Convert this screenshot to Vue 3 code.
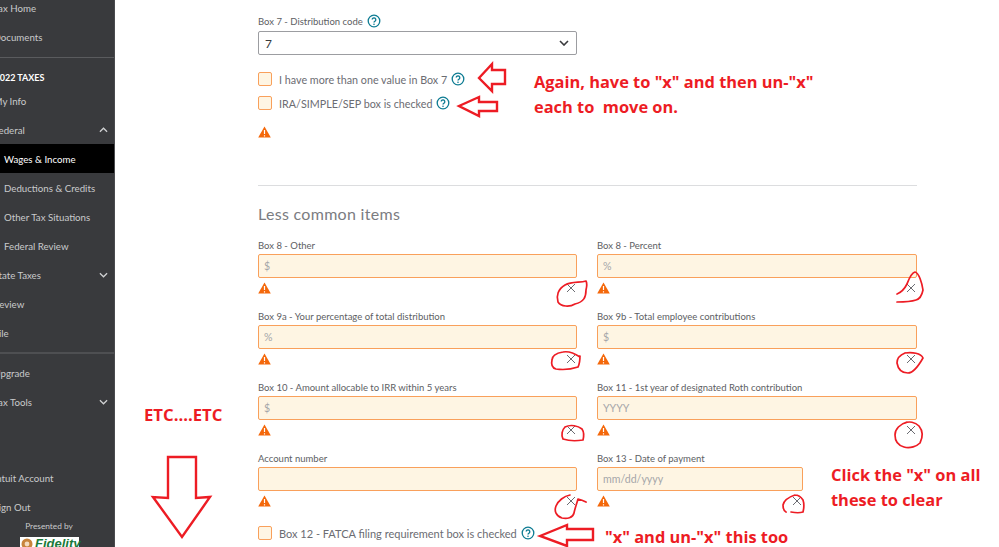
<script setup>
const navTop = [
  { t: 'Tax Home' }, { t: 'Documents' }
]
const navMid = [
  { t: 'My Info' },
  { t: 'Federal', chev: 'up' },
  { t: 'Wages & Income', sub: true, active: true },
  { t: 'Deductions & Credits', sub: true },
  { t: 'Other Tax Situations', sub: true },
  { t: 'Federal Review', sub: true },
  { t: 'State Taxes', chev: 'down' },
  { t: 'Review' },
  { t: 'File' }
]
const navLow = [{ t: 'Upgrade' }, { t: 'Tax Tools', chev: 'down' }]
const navEnd = [{ t: 'Intuit Account' }, { t: 'Sign Out' }]

const fields = [
  { label: 'Box 8 - Other', ph: '$' },
  { label: 'Box 8 - Percent', ph: '%' },
  { label: 'Box 9a - Your percentage of total distribution', ph: '%' },
  { label: 'Box 9b - Total employee contributions', ph: '$' },
  { label: 'Box 10 - Amount allocable to IRR within 5 years', ph: '$' },
  { label: 'Box 11 - 1st year of designated Roth contribution', ph: 'YYYY' },
  { label: 'Account number', ph: '' },
  { label: 'Box 13 - Date of payment', ph: 'mm/dd/yyyy', short: true }
]

const arrows = [
  '479,78 492,64 492,70 505,70 505,84 492,84 492,91',
  '459,106 479,97 479,102 497,102 497,111 479,111 479,116',
  '540,536 567,525 567,529 593,529 593,540 567,540 567,546',
  '168,457 196,457 196,498 210,497 182,537 153,497 168,498'
]
const scribbles = [
  'M565 285C558 289 556 296 558 302C561 307 570 307 575 304C584 302 586 297 586 290C587 286 587 283 586 281C580 283 572 281 565 285',
  'M580 357C574 353 568 351 563 352C557 353 552 355 552 360C551 364 552 368 556 369C563 370 572 369 578 367C580 363 580 359 580 356',
  'M897 294C902 292 905 288 907 284C909 279 911 273 915 272C919 273 922 283 923 290C922 295 920 299 916 300C910 302 903 302 897 302',
  'M905 353C900 355 897 359 897 363C898 369 902 373 908 373C914 373 919 365 923 358C921 353 912 352 905 353',
  'M565 427C562 430 561 435 563 439C569 441 577 441 583 440C584 436 584 432 582 429C578 426 571 424 565 427',
  'M570 495C564 496 558 501 556 506C554 511 556 516 562 518C567 519 573 518 574 513C575 508 577 503 578 499C582 500 584 501 586 502',
  'M907 422C900 424 895 429 895 435C895 441 897 445 904 447C910 449 917 446 920 443C923 437 923 431 919 426C915 422 909 421 905 423',
  'M795 495C789 497 784 500 783 505C783 509 784 511 786 512M791 512C796 513 800 513 803 512C804 508 804 503 803 500C801 497 798 495 795 495'
]
</script>

<template>
  <div class="page">
    <aside class="side">
      <div class="nav-block">
        <div v-for="n in navTop" :key="n.t" class="nav">{{ n.t }}</div>
      </div>
      <div class="rule"></div>
      <div class="year">2022 TAXES</div>
      <div class="nav-block">
        <div
          v-for="n in navMid"
          :key="n.t"
          class="nav"
          :class="{ sub: n.sub, active: n.active }"
        >
          <span>{{ n.t }}</span>
          <svg v-if="n.chev" class="chev" viewBox="0 0 10 6" :class="n.chev">
            <path d="M1 1l4 4 4-4" />
          </svg>
        </div>
      </div>
      <div class="rule rule-low"></div>
      <div class="nav-block">
        <div v-for="n in navLow" :key="n.t" class="nav">
          <span>{{ n.t }}</span>
          <svg v-if="n.chev" class="chev" viewBox="0 0 10 6"><path d="M1 1l4 4 4-4" /></svg>
        </div>
      </div>
      <div class="nav-block end">
        <div v-for="n in navEnd" :key="n.t" class="nav">{{ n.t }}</div>
      </div>
      <div class="presented">Presented by</div>
      <div class="logo">
        <svg class="logo-mark" viewBox="0 0 12 12"><circle cx="6" cy="6" r="5.5" fill="#c8843c" /><circle cx="6" cy="6" r="2.4" fill="#f3dcc0" /></svg>
        <span>Fidelity</span>
      </div>
    </aside>

    <main class="main">
      <div class="label">
        Box 7 - Distribution code
        <svg class="help" viewBox="0 0 14 14"><circle cx="7" cy="7" r="5.8" /><path d="M5.2 5.6a1.8 1.8 0 1 1 2.7 1.6c-.6.4-.9.7-.9 1.3" /><circle class="dot" cx="7" cy="10.2" r=".8" /></svg>
      </div>
      <div class="select">
        <span>7</span>
        <svg class="sel-chev" viewBox="0 0 10 6"><path d="M1 1l4 4 4-4" /></svg>
      </div>

      <div class="check first">
        <span class="box"></span>
        I have more than one value in Box 7
        <svg class="help" viewBox="0 0 14 14"><circle cx="7" cy="7" r="5.8" /><path d="M5.2 5.6a1.8 1.8 0 1 1 2.7 1.6c-.6.4-.9.7-.9 1.3" /><circle class="dot" cx="7" cy="10.2" r=".8" /></svg>
      </div>
      <div class="check second">
        <span class="box"></span>
        IRA/SIMPLE/SEP box is checked
        <svg class="help" viewBox="0 0 14 14"><circle cx="7" cy="7" r="5.8" /><path d="M5.2 5.6a1.8 1.8 0 1 1 2.7 1.6c-.6.4-.9.7-.9 1.3" /><circle class="dot" cx="7" cy="10.2" r=".8" /></svg>
      </div>
      <svg class="warn warn-solo" viewBox="0 0 13 12"><path d="M6.5.6 12.8 11.6H.2Z" /><path class="mark" d="M6.5 4v4M6.5 9.2v1.2" /></svg>

      <div class="divider"></div>
      <h2 class="heading">Less common items</h2>

      <div class="grid">
        <div v-for="f in fields" :key="f.label" class="field" :class="{ short: f.short }">
          <div class="label">{{ f.label }}</div>
          <div class="input">{{ f.ph }}</div>
          <div class="err">
            <svg class="warn" viewBox="0 0 13 12"><path d="M6.5.6 12.8 11.6H.2Z" /><path class="mark" d="M6.5 4v4M6.5 9.2v1.2" /></svg>
            <svg class="x" viewBox="0 0 10 10"><path d="M1 1l8 8M9 1l-8 8" /></svg>
          </div>
        </div>
      </div>

      <div class="check last">
        <span class="box"></span>
        Box 12 - FATCA filing requirement box is checked
        <svg class="help" viewBox="0 0 14 14"><circle cx="7" cy="7" r="5.8" /><path d="M5.2 5.6a1.8 1.8 0 1 1 2.7 1.6c-.6.4-.9.7-.9 1.3" /><circle class="dot" cx="7" cy="10.2" r=".8" /></svg>
      </div>
    </main>

    <svg class="ink" viewBox="0 0 999 547">
      <polygon v-for="a in arrows" :key="a" :points="a" class="arrow" />
      <path v-for="s in scribbles" :key="s" :d="s" class="scribble" />
    </svg>
    <div class="note note-again">Again, have to "x" and then un-"x"<br />each to&nbsp; move on.</div>
    <div class="note note-click">Click the "x" on all<br />these to clear</div>
    <div class="note note-this">"x" and un-"x" this too</div>
    <div class="note note-etc">ETC....ETC</div>
  </div>
</template>

<style>
html, body { margin: 0; background: #fff; }
</style>

<style scoped>
.page {
  position: relative;
  display: flex;
  width: 999px;
  height: 547px;
  overflow: hidden;
  background: #fff;
  font-family: Lato, "Open Sans", sans-serif;
}
.side {
  flex: 0 0 115px;
  box-sizing: border-box;
  width: 115px;
  height: 547px;
  background: #393a3d;
  border-right: 1px solid #4a4b4e;
  color: #c9cacc;
  font-size: 9.7px;
  overflow: hidden;
}
.nav-block:first-child { margin-top: -7px; }
.nav {
  display: flex;
  align-items: center;
  justify-content: space-between;
  height: 29px;
  padding: 0 6px 0 0;
  margin-left: -6.5px;
  white-space: nowrap;
}
.nav.sub { margin-left: 0; padding-left: 4px; padding-right: 0; }
.nav.active { background: #000; color: #fff; }
.chev {
  width: 9px;
  height: 6px;
  fill: none;
  stroke: #d0d1d3;
  stroke-width: 1.4;
}
.chev.up { transform: rotate(180deg); }
.rule { height: 1px; background: #5a5b5e; margin-top: 6px; }
.rule-low { height: 2px; background: #4e4f52; margin-top: 5px; }
.year {
  margin: 13px 0 1px -5.5px;
  height: 14px;
  line-height: 14px;
  font-size: 9px;
  font-weight: 700;
  color: #fff;
}
.rule-low + .nav-block { margin-top: 4px; }
.end { margin-top: 47px; }
.presented {
  width: 98px;
  text-align: center;
  font-size: 8.3px;
  line-height: 11px;
  color: #c9cacc;
}
.logo {
  display: flex;
  align-items: flex-start;
  gap: 2px;
  width: 59px;
  height: 18px;
  margin: 5px 0 0 20px;
  padding-left: 1px;
  box-sizing: border-box;
  background: #fff;
  color: #1a7a3a;
  font-size: 13px;
  line-height: 14px;
  font-weight: 900;
  font-style: italic;
  font-family: "Liberation Sans", sans-serif;
}
.logo-mark { width: 12px; height: 12px; flex: none; margin-top: 1px; }

.main {
  flex: 1;
  box-sizing: border-box;
  padding: 14px 0 0 143px;
  color: #6b6c72;
}
.label {
  display: flex;
  align-items: center;
  gap: 4px;
  height: 14px;
  font-size: 9.5px;
  color: #5d5e63;
  white-space: nowrap;
}
.help {
  width: 14px;
  height: 14px;
  flex: none;
  fill: none;
  stroke: #0e7c93;
  stroke-width: 1.3;
}
.help .dot { fill: #0e7c93; stroke: none; }
.select {
  display: flex;
  align-items: center;
  justify-content: space-between;
  box-sizing: border-box;
  width: 319px;
  height: 24px;
  margin-top: 3px;
  padding: 0 7px 0 6px;
  border: 1px solid #9c9da1;
  border-radius: 2px;
  font-size: 12px;
  color: #393a3d;
}
.sel-chev {
  width: 10px;
  height: 6px;
  fill: none;
  stroke: #393a3d;
  stroke-width: 1.6;
}
.check {
  display: flex;
  align-items: center;
  gap: 6px;
  height: 14px;
  font-size: 10.75px;
  color: #6b6c72;
  white-space: nowrap;
}
.check .help { margin-left: -2px; }
.check.first { margin-top: 17px; }
.check.second { margin-top: 10px; }
.check.last { margin-top: 4px; font-size: 11px; }
.box {
  box-sizing: border-box;
  width: 14px;
  height: 14px;
  margin-right: 1px;
  background: #fef5e3;
  border: 1px solid #f9a05b;
  border-radius: 2px;
}
.warn { width: 13px; height: 12px; flex: none; }
.warn path { fill: #f4680b; }
.warn .mark { fill: none; stroke: #fff; stroke-width: 1.2; }
.warn-solo { display: block; margin: 16px 0 0 0; }
.divider {
  width: 659px;
  height: 1px;
  margin-top: 47px;
  background: #dcdddf;
}
.heading {
  margin: 19px 0 0;
  height: 18px;
  line-height: 18px;
  font-size: 16px;
  font-weight: 400;
  letter-spacing: .3px;
  color: #7b7c81;
}
.grid {
  display: grid;
  grid-template-columns: 319px 320px;
  column-gap: 20px;
  width: 659px;
  margin-top: 15px;
}
.field { height: 71px; }
.input {
  box-sizing: border-box;
  height: 24px;
  margin-top: 2px;
  padding-left: 5px;
  line-height: 22px;
  background: #fef5e3;
  border: 1px solid #f9a05b;
  border-radius: 2px;
  font-size: 10.6px;
  color: #a5a6a9;
}
.field.short { width: 206px; }
.err {
  display: flex;
  align-items: center;
  justify-content: space-between;
  height: 12px;
  margin-top: 4px;
  padding-right: 1px;
}
.x {
  width: 10px;
  height: 10px;
  fill: none;
  stroke: #6b6c72;
  stroke-width: 1;
}

.ink {
  position: absolute;
  left: 0;
  top: 0;
  width: 999px;
  height: 547px;
  pointer-events: none;
}
.arrow { fill: #fff; stroke: #ed1c24; stroke-width: 2.4; stroke-linejoin: miter; }
.scribble { fill: none; stroke: #ed1c24; stroke-width: 1.7; stroke-linecap: round; stroke-linejoin: round; }
.note {
  position: absolute;
  font-family: "Open Sans", sans-serif;
  font-weight: 700;
  font-size: 16.4px;
  line-height: 25px;
  color: #ed1c24;
  white-space: nowrap;
}
.note-again { left: 534px; top: 69px; }
.note-click { left: 831px; top: 462px; }
.note-this { left: 605px; top: 524px; }
.note-etc { left: 144px; top: 402px; font-size: 16.7px; }
</style>
